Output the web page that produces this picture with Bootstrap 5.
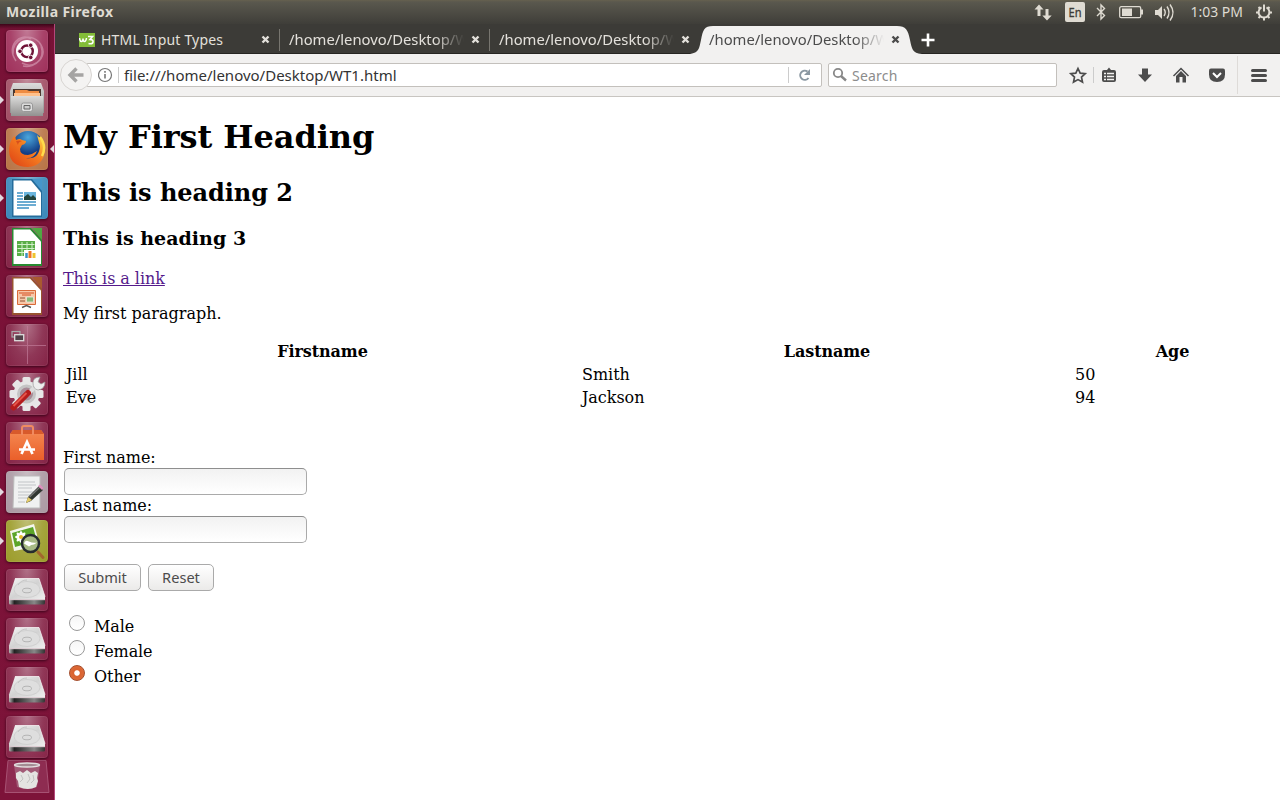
<!DOCTYPE html>
<html lang="en">
<head>
<meta charset="utf-8">
<title>Mozilla Firefox</title>
<link href="https://cdn.jsdelivr.net/npm/bootstrap@5.3.0/dist/css/bootstrap.min.css" rel="stylesheet">
<style>
body{width:1280px;height:800px;overflow:hidden;font-family:"Noto Sans","Open Sans",sans-serif;font-size:14px;line-height:20px;background:#fff}
svg{display:block;flex:none}
.topbar{height:24px;background:linear-gradient(#66614f 0,#5a584e 2px,#3f3e39 24px);color:#dfdbd2}
.topbar .app{font-weight:700;font-size:14px;letter-spacing:.4px;margin-left:6px}
.launcher{width:55px;height:776px;background:linear-gradient(#3d0519 0,#781236 5px,#7b1238 50%,#7d1339);border-right:1px solid #b5487b;padding-top:6px}
.dock{height:42px;margin-bottom:7px;position:relative}
.tile{width:42px;height:42px;margin-left:6px;border-radius:4px;background:radial-gradient(ellipse at 50% 0,#ffffff66 0,#ffffff28 55%,#ffffff12 100%);box-shadow:0 0 0 1px #ffffff12 inset,0 1px 3px #3b051b}
.run::before,.focus::after{content:"";position:absolute;top:17px;border:4px solid transparent}
.run::before{left:0;border-left-color:#e3d9df;border-right:0}
.focus::after{right:0;border-right-color:#e3d9df;border-left:0}
.tabs{height:30px;background:#3c3b37;border-bottom:1px solid #262522;color:#e3e0db}
.tabx{width:210px;height:29px;padding:3px 9px 0 9px}
.tabx+.tabx{position:relative}
.sep::before{content:"";position:absolute;left:-1px;top:5px;width:1px;height:22px;background:#77756f}
.tabx .ttl{padding-top:3px;white-space:nowrap}
.tabx .path{width:181px;padding-top:2px;font-size:14.8px;-webkit-mask-image:linear-gradient(90deg,#000 145px,transparent 175px)}
.current{color:#4c4c4c}
.shape{position:absolute;left:-10px;top:1px}
.current .ttl,.current .cls{position:relative}
.toolbar{height:43px;background:#f2f1f0;border-bottom:1px solid #c8c5c1;color:#333}
.field{height:24px;background:#fff;border:1px solid #c3c0bc;border-radius:2px}
.back{width:32px;height:32px;border:1px solid #d8d5d2;border-radius:50%;background:#f4f3f2;margin-left:5px;position:relative}
.url{width:736px;margin-left:-6px;padding-left:11px}
.vline{width:1px;background:#ccc}
.page{font:16px/19px "DejaVu Serif",serif;color:#000;padding:22px 8px 0}
.page h1{font-size:32px;line-height:37px;font-weight:700;letter-spacing:-.06px;margin:0 0 23px}
.page h2{font-size:24px;line-height:28px;font-weight:700;letter-spacing:-.05px;margin:0 0 20px}
.page h3{font-size:19px;line-height:22px;font-weight:700;letter-spacing:.03px;margin:0 0 20px}
.page a{color:#551a8b;letter-spacing:-.06px}
.page p{margin:16px 0}
.people{width:1209px;table-layout:fixed;border-collapse:separate;border-spacing:2px}
.people th,.people td{padding:1px}
.people td{letter-spacing:-.04px}
.people th{text-align:center;letter-spacing:-.1px;padding-left:2px}
.page .cap{letter-spacing:-.08px}
.txt{display:block;width:243px;height:27px;margin-left:1px;border:1px solid #aaa;border-top-color:#8e8e8e;border-radius:5px;background:linear-gradient(#f2f2f2,#fff)}
.push{height:27px;border:1px solid #aaa;border-radius:5px;background:linear-gradient(#fff,#ebeae9);color:#4c4c4c;font:14.6px/24px "Noto Sans",sans-serif;padding:0 0 2px}
.opt{height:25px;padding-top:1px;letter-spacing:-.08px}
.opt input{appearance:none;width:16px;height:16px;border:1px solid #999;border-radius:50%;background:linear-gradient(#f6f6f6,#fff);margin:0 9px 7px 6px}
.opt input:checked{border-color:#a54e2d;background:radial-gradient(circle,#fff 0 2.3px,#d9622f 3.2px,#e0703f)}
</style>
<script src="https://cdn.jsdelivr.net/npm/bootstrap@5.3.0/dist/js/bootstrap.bundle.min.js"></script>
</head>
<body>
<svg width="0" height="0" class="position-absolute">
<defs>
<linearGradient id="silver" x2="0" y2="1"><stop stop-color="#dcdcdb"/><stop offset="1" stop-color="#929190"/></linearGradient>
<linearGradient id="disk" x2="1" y2="1"><stop stop-color="#f5f5f5"/><stop offset=".5" stop-color="#d2d2d2"/><stop offset="1" stop-color="#eee"/></linearGradient>
<linearGradient id="edge"><stop stop-color="#bbb"/><stop offset=".15" stop-color="#222"/><stop offset=".7" stop-color="#888"/><stop offset="1" stop-color="#333"/></linearGradient>
<radialGradient id="globe" cx=".5" cy=".2"><stop stop-color="#4ba6dc"/><stop offset="1" stop-color="#123d85"/></radialGradient>
<linearGradient id="fox" x1="0" y1="1" x2="1" y2="0"><stop stop-color="#dd3d14"/><stop offset=".55" stop-color="#f47c20"/><stop offset="1" stop-color="#ffe04a"/></linearGradient>
<linearGradient id="bag" x2="0" y2="1"><stop stop-color="#f58a52"/><stop offset="1" stop-color="#ea5f2a"/></linearGradient>
<g id="drive"><path d="M9 9.500h24l6 18v3H3v-3z" fill="url(#disk)"/><path d="M9 9.500h24l6 18" fill="none" stroke="#fff" stroke-width=".7"/><ellipse cx="21" cy="20.500" rx="13" ry="8" fill="#dedede" stroke="#cbcbcb" stroke-width=".8"/><path d="M12 16q3-5 9-5" fill="none" stroke="#c5c5c5"/><ellipse cx="21" cy="21.500" rx="4.500" ry="2.300" fill="#ddd" stroke="#a8a8a8" stroke-width=".8"/><path d="M3 31h36v3q0 1.500-1.500 1.500h-33Q3 35.500 3 34z" fill="url(#edge)"/><path d="M3 30.700h36" stroke="#eee" stroke-width=".8"/></g>
<path id="cross" d="M1.500 1.500l6 6m0-6l-6 6" stroke="currentColor" stroke-width="2.400"/>
</defs>
</svg>
<div class="topbar d-flex align-items-center">
<span class="app">Mozilla Firefox</span>
<svg class="ms-auto" width="246" height="24" viewBox="1034 0 246 24" fill="#dfdbd2" font-family="Noto Sans, sans-serif">
<path d="M1039 4.500l4.500 5h-3v6.500h-3V9.500h-3zM1047 20.500l-4.700-5h3.200V9h3v6.500h3.200z"/>
<rect x="1065" y="2" width="20" height="20" rx="2"/><text x="1068.500" y="17" font-size="12.500" textLength="13" lengthAdjust="spacingAndGlyphs" fill="#3c3b37" stroke="#3c3b37" stroke-width=".3">En</text>
<path d="M1097 8l7.500 7.500-3.500 3.500V5l3.500 3.500-7.500 7.500" fill="none" stroke="#dfdbd2" stroke-width="1.400"/>
<rect x="1119.700" y="6.700" width="21" height="11" rx="1.500" fill="none" stroke="#dfdbd2" stroke-width="1.300"/><path d="M1122 8.500h10v7.500h-10zM1141 9.500h2v5h-2z"/>
<path d="M1155 10h3l4-4v13l-4-4h-3z"/><path d="M1164 9q2.500 3.300 0 7M1167 6.500q4 6 0 12M1170 4.500q6 8 0 16" fill="none" stroke="#dfdbd2" stroke-width="1.400"/>
<text x="1190.500" y="17" font-size="14" textLength="52.500" lengthAdjust="spacingAndGlyphs">1:03 PM</text>
<g stroke="#dfdbd2" fill="none"><path d="M1261.500 7.400a5.400 5.400 0 1 0 5 0" stroke-width="2"/><path d="M1264 4.500v7" stroke-width="2"/><path d="M1264 17.500v3M1256 12.500h3M1269 12.500h3M1258.500 18l2-2M1269.500 18l-2-2M1258.500 7l2 2M1269.500 7l-2 2" stroke-width="2"/></g>
</svg>
</div>
<div class="d-flex">
<nav class="launcher flex-shrink-0">
<div class="dock"><div class="tile" style="background-color:#98204e"><svg viewBox="0 0 42 42"><path d="M7 24C6 10 22 2 33 12M10 31C-1 15 15 2 25 9M35 16c5 15-9 23-19 17M33 12c11 14-4 27-16 24" fill="none" stroke="#d394ae" stroke-width="1.500" opacity=".7"/><circle cx="21" cy="21" r="11" fill="#fff"/><circle cx="21" cy="21.300" r="5.800" fill="none" stroke="#6e1237" stroke-width="2.400"/><g fill="#6e1237" stroke="#fff" stroke-width=".9"><circle cx="14" cy="21.300" r="2.300"/><circle cx="24.700" cy="15.200" r="2.300"/><circle cx="24.700" cy="27.400" r="2.300"/></g></svg></div></div>
<div class="dock run"><div class="tile" style="background-color:#994058"><svg viewBox="0 0 42 42"><path d="M7 4h28l3 8v22H4V12z" fill="url(#silver)"/><path d="M7 10h28v7H7z" fill="#4a3830"/><path d="M9 11h12l2 1h10v5H9z" fill="#ee8c43"/><path d="M8 14h26v3H8z" fill="#ffc18c"/><path d="M5 17h32v20H5z" fill="url(#silver)"/><rect x="15.500" y="24" width="11" height="8.500" rx="2" fill="#ddd" stroke="#999"/><path d="M18 26.500h6v3.500h-6z" fill="#ccc" stroke="#666"/></svg></div></div>
<div class="dock run focus"><div class="tile" style="background-color:#b26836"><svg viewBox="0 0 42 42"><circle cx="22" cy="19" r="16" fill="url(#globe)"/><path d="M6 11q2-3 3-3l1 4q4-2 6 0l4 1q0 3-4 4l-2 4q0 6 8 6 5-1 9-4-3 8-11 7 13 2 14-12l-3-11q6 5 8 14-1 17-17 18Q4 39 3 23q0-7 3-12z" fill="url(#fox)"/><path d="M34 9q7 9 2 19" fill="none" stroke="#ffdc4b" stroke-width="2.500"/><path d="M10 13q4-1 6 0-4 1-4 4z" fill="#d9501c"/></svg></div></div>
<div class="dock run"><div class="tile" style="background-color:#2a7fb4"><svg viewBox="0 0 42 42"><path d="M6 2h30v38H6z" fill="#256c9b"/><path d="M7.500 3.500H25l10 12v23H7.500z" fill="#fff"/><path d="M26 2h10v12z" fill="#4696ca"/><path d="M11 16h6m-6 3h6m-6 3h6m-6 3h19m-19 3h19m-19 3h12" stroke="#3c91c4" stroke-width="1.700"/><path d="M18 15h12v8H18z" fill="#6bb6de"/><path d="M18 23v-3l4-3 3 3 2-2 3 3v2z" fill="#24453c"/></svg></div></div>
<div class="dock"><div class="tile"><svg viewBox="0 0 42 42"><path d="M6 2h19l11 12v26H6z" fill="#278b31"/><path d="M7.500 3.500H24l11 12v22.500H7.500z" fill="#fff"/><path d="M26 2h10v12z" fill="#4fa843"/><path d="M11 15h18v15H11z" fill="#59ad46"/><path d="M11.500 18.500h17m-17 4h17m-17 4h17M16 16v14m5-14v14m5-14v14" stroke="#d2f1ca"/><path d="M18 24h12v8H18z" fill="#fff"/><path d="M20.500 27v5" stroke="#3c91c4" stroke-width="2.500"/><path d="M24 25v7" stroke="#f17425" stroke-width="3"/><path d="M28 27v5" stroke="#efc42e" stroke-width="3"/></svg></div></div>
<div class="dock"><div class="tile"><svg viewBox="0 0 42 42"><path d="M6 2h19l11 12v26H6z" fill="#98532f"/><path d="M7.500 3.500H24l11 12v22.500H7.500z" fill="#fff"/><path d="M26 2h10v12z" fill="#a8592f"/><path d="M11.500 15.500h18v14h-18z" fill="#f7c7a7" stroke="#d96a39"/><path d="M13 18h15M16 20h9" stroke="#d44e21"/><path d="M14 23h5m-5 3h5" stroke="#8e5032"/><path d="M20.500 22h7v5h-7z" fill="#87b875" stroke="#eee" stroke-width=".7"/><path d="M16 32.500l4.500-2 4.500 2" fill="none" stroke="#555" stroke-width="1.500"/></svg></div></div>
<div class="dock"><div class="tile"><svg viewBox="0 0 42 42"><path d="M21.500 2v38M2 21.500h38" stroke="#c17a98" stroke-width="1" opacity=".7"/><rect x="6" y="7.500" width="8" height="5.500" fill="none" stroke="#aaa" stroke-width="1.200"/><rect x="8.700" y="10.700" width="9" height="6" fill="#514149" stroke="#ddd" stroke-width="1.300"/></svg></div></div>
<div class="dock"><div class="tile"><svg viewBox="0 0 42 42"><g transform="translate(20.500 21)"><g fill="#e7e7e7"><rect x="-4" y="-17" width="8" height="34" rx="1.500"/><rect x="-4" y="-17" width="8" height="34" rx="1.500" transform="rotate(45)"/><rect x="-4" y="-17" width="8" height="34" rx="1.500" transform="rotate(90)"/><rect x="-4" y="-17" width="8" height="34" rx="1.500" transform="rotate(135)"/></g><circle r="13" fill="#e6e6e6"/><circle r="8" fill="#a78b97" stroke="#c4c4c4" stroke-width="3"/></g><path d="M21 22l10-10" stroke="#ddd" stroke-width="4"/><path d="M27 10q0-6 7-6l-2 5 3 2 4-2q0 7-7 8-5-1-5-7z" fill="#eee" stroke="#999" stroke-width=".7"/><path d="M7.500 34.500L22 20" stroke="#b51c1c" stroke-width="6" stroke-linecap="round"/><path d="M7.500 33l13-13" stroke="#e65448" stroke-width="2"/></svg></div></div>
<div class="dock"><div class="tile"><svg viewBox="0 0 42 42"><path d="M4 12l3-4h28l3 4v26H4z" fill="url(#bag)"/><path d="M4 12l3-4h28l3 4z" fill="#d85a2b"/><path d="M16 13V6q0-2 2-2h7q2 0 2 2v7" fill="none" stroke="#f08a60" stroke-width="2"/><path d="M15.500 32L21 20l5.500 12M13 27.500h16" fill="none" stroke="#fff" stroke-width="2.700"/></svg></div></div>
<div class="dock run"><div class="tile" style="background-color:#a4919b"><svg viewBox="0 0 42 42"><path d="M8 5h26v32H7z" fill="#f0f1f1" stroke="#bbb"/><path d="M12 11h17M12 14h18M12 17h14M12 21h16M12 24h12M12 27h10M12 31h7" stroke="#c1c4c7"/><path d="M20 32l2-6 11-11 4 4-12 11z" fill="#303630"/><path d="M20 32l2-6 4 3z" fill="#e4cb67"/><path d="M23.500 26l11-10.500" stroke="#777" stroke-width="1.300"/><path d="M32 15l2-1.500 3.500 3.500-1.500 2z" fill="#df8ebd"/></svg></div></div>
<div class="dock run"><div class="tile" style="background-color:#949419"><svg viewBox="0 0 42 42"><path d="M4 11L28 4l6 22L8 31z" fill="#f4f6ed"/><path d="M6 13l21-6 4 14-22 6z" fill="#5ca529"/><g fill="#fff"><ellipse cx="15" cy="17" rx="6" ry="2"/><ellipse cx="15" cy="17" rx="2" ry="6"/><ellipse cx="15" cy="17" rx="6" ry="2" transform="rotate(45 15 17)"/><ellipse cx="15" cy="17" rx="6" ry="2" transform="rotate(-45 15 17)"/></g><circle cx="15" cy="17" r="2" fill="#e2b928"/><circle cx="24.500" cy="23.500" r="8.500" fill="#a7ba84" stroke="#262c2e" stroke-width="2.500"/><path d="M18 23.500q1-4 5-2t8 1l-3 2q-3 0-5 2z" fill="#fff"/><path d="M32 32l5 5.500" stroke="#a2672d" stroke-width="3" stroke-linecap="round"/></svg></div></div>
<div class="dock"><div class="tile"><svg viewBox="0 0 42 42"><use href="#drive"/></svg></div></div>
<div class="dock"><div class="tile"><svg viewBox="0 0 42 42"><use href="#drive"/></svg></div></div>
<div class="dock"><div class="tile"><svg viewBox="0 0 42 42"><use href="#drive"/></svg></div></div>
<div class="dock" style="margin-bottom:2px"><div class="tile"><svg viewBox="0 0 42 42"><use href="#drive"/></svg></div></div>
<svg width="54" height="33" viewBox="0 0 54 33"><path d="M8 .5h38l3 32H5z" fill="#8e2c51" stroke="#a75273"/><path d="M14 5l3 22q10 4 20 0l3-22z" fill="#b58a9b" opacity=".5"/><path d="M16 13l4-2 3 2 4-3 4 3 4-2 3 2-1 5 1 3-2 6q-8 4-17 0l-1-6-2-3z" fill="#e4e4e1"/><path d="M21 15l2 4-3 3m8-8l2 5-3 4m6-8l1 5-3 3" fill="none" stroke="#c2c2c0"/><ellipse cx="27" cy="5" rx="12.500" ry="2" fill="#a38b93" stroke="#e3dfe0" stroke-width="1.500"/></svg>
</nav>
<main class="flex-grow-1">
<div class="tabs d-flex">
<div class="tabx d-flex" style="margin-left:15px">
<svg class="me-1" width="18" height="24" viewBox="0 0 18 24"><rect y="6" width="16" height="14" fill="#83bd38"/><path d="M.5 11q.5 3.500 2 3.500t1.500-3q0 3 1.500 3T7.500 11" fill="none" stroke="#fff" stroke-width="1.500"/><path d="M9 9.500h4.500l-2.500 3q3.500 0 3 2.500t-4.500 1.500" fill="none" stroke="#fff" stroke-width="1.600"/></svg>
<div class="ttl" style="letter-spacing:.2px">HTML Input Types</div>
<svg class="mt-2 ms-auto cls" style="margin-right:1px" width="9" height="9"><use href="#cross"/></svg></div>
<div class="tabx sep d-flex"><div class="ttl path">/home/lenovo/Desktop/W</div><svg class="mt-2 ms-auto" style="margin-right:1px" width="9" height="9"><use href="#cross"/></svg></div>
<div class="tabx sep d-flex"><div class="ttl path">/home/lenovo/Desktop/W</div><svg class="mt-2 ms-auto" style="margin-right:1px" width="9" height="9"><use href="#cross"/></svg></div>
<div class="tabx current d-flex"><svg class="shape" width="234" height="29" viewBox="690 25 234 29"><path d="M689 54C699 53 699 49 701 40 703 30 704 26 713 26H897C906 26 908 30 910 40 912 49 912 53 922 54z" fill="#f2f1f0"/></svg><div class="ttl path">/home/lenovo/Desktop/W</div><svg class="mt-2 ms-auto cls" style="margin-right:1px" width="9" height="9"><use href="#cross"/></svg></div>
<svg style="margin:9px 0 0 11px" width="14" height="14"><path d="M7 .5v13M.5 7h13" stroke="#fff" stroke-width="2.600"/></svg>
</div>
<div class="toolbar d-flex align-items-center">
<div class="back"><svg width="30" height="30" viewBox="0 0 30 30"><path d="M15.500 8.500L9 15l6.500 6.500M9.500 15H22.500" fill="none" stroke="#a5a4a3" stroke-width="3.400"/></svg></div>
<div class="field url d-flex align-items-center">
<svg width="20" height="20" viewBox="0 0 20 20"><circle cx="7" cy="10" r="6.500" fill="none" stroke="#777" stroke-width="1.200"/><path d="M7 9v4.500M7 6v1.700" stroke="#777" stroke-width="1.600"/></svg>
<span class="vline" style="height:16px;margin-right:5px"></span><span style="font-size:15px;padding-bottom:1px">file:///home/lenovo/Desktop/WT1.html</span>
<span class="vline ms-auto" style="height:16px"></span>
<svg width="32" height="20" viewBox="0 0 32 20"><path d="M18.500 6.500A4.600 4.600 0 1 0 19.500 13" fill="none" stroke="#8b98a2" stroke-width="2"/><path d="M21 4v6h-6z" fill="#8b98a2"/></svg>
</div>
<div class="field d-flex align-items-center" style="width:229px;margin-left:6px"><svg width="23" height="20" viewBox="0 0 23 20"><circle cx="9" cy="8" r="4.200" fill="none" stroke="#888" stroke-width="1.800"/><path d="M12 11l5 4.500" stroke="#888" stroke-width="2.400"/></svg><span style="color:#8c8c8c;letter-spacing:.2px;padding-top:1px">Search</span></div>
<svg width="223" height="42" viewBox="1057 54 223 42" fill="#4c4c4c"><path d="M1078 68.500l2.200 4.600 5 .6-3.700 3.400 1 5-4.500-2.500-4.500 2.500 1-5-3.700-3.400 5-.6z" fill="none" stroke="#4c4c4c" stroke-width="1.700"/><path d="M1093.500 67v16" stroke="#ccc"/><path d="M1104 70h3l2-2.500 2 2.500h3q2 0 2 2v8q0 2-2 2h-10q-2 0-2-2v-8q0-2 2-2z"/><path d="M1104 73.500h2m1 0h7M1104 76.500h2m1 0h7M1104 79.500h2m1 0h7" stroke="#f2f1f0" stroke-width="1.500"/><path d="M1142 68.500h6v6h4l-7 7.500-7-7.500h4z"/><path d="M1173.500 76l7.500-7.500 7.500 7.500" fill="none" stroke="#4c4c4c" stroke-width="1.500"/><path d="M1176 76l5-5 5 5v6.500h-3.500V77h-3v5.500H1176z"/><path d="M1211 68.500h12q2 0 2 2v4q0 7.500-8 7.500t-8-7.500v-4q0-2 2-2z"/><path d="M1213 73l4 4 4-4" fill="none" stroke="#fff" stroke-width="2"/><path d="M1237.500 56v38" stroke="#dedbd8"/><path d="M1252.500 70.500h13M1252.500 75.500h13M1252.500 80.500h13" stroke="#4c4c4c" stroke-width="3" stroke-linecap="round"/></svg>
</div>
<div class="page">
<h1>My First Heading</h1>
<h2>This is heading 2</h2>
<h3>This is heading 3</h3>
<a href="#">This is a link</a>
<p>My first paragraph.</p>
<table class="people"><colgroup><col style="width:514px"><col style="width:491px"><col></colgroup>
<tr><th>Firstname</th><th>Lastname</th><th>Age</th></tr><tr><td>Jill</td><td>Smith</td><td>50</td></tr><tr><td>Eve</td><td>Jackson</td><td>94</td></tr></table>
<form style="margin-top:38px">
<label class="cap d-block" for="fn" style="height:20px">First name:</label><input id="fn" class="txt">
<label class="cap d-block" for="ln" style="height:21px;padding-top:1px">Last name:</label><input id="ln" class="txt">
<div class="d-flex" style="margin:21px 0 22px 1px;gap:7px"><button type="button" class="push" style="width:77px">Submit</button><button type="button" class="push" style="width:66px">Reset</button></div>
<label class="opt d-flex align-items-center"><input type="radio" name="g">Male</label>
<label class="opt d-flex align-items-center"><input type="radio" name="g">Female</label>
<label class="opt d-flex align-items-center"><input type="radio" name="g" checked>Other</label>
</form>
</div>
</main>
</div>
</body>
</html>
